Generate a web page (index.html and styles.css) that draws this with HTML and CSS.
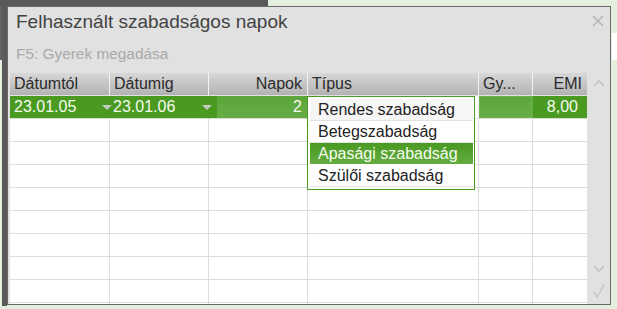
FILE: index.html
```html
<!DOCTYPE html>
<html lang="hu">
<head>
<meta charset="utf-8">
<title>Felhasznált szabadságos napok</title>
<link rel="stylesheet" href="styles.css">
</head>
<body>
<div class="dialog">
  <div class="titlebar">
    <span class="title">Felhasznált szabadságos napok</span>
    <svg class="close" width="12" height="12" viewBox="0 0 12 12"><path d="M1 1L11 11M11 1L1 11" fill="none" stroke="#b4b4b4" stroke-width="1.5"/></svg>
  </div>
  <div class="hint">F5: Gyerek megadása</div>
  <div class="tablearea">
    <div class="grid">
      <div class="row head">
        <div class="cell">Dátumtól</div>
        <div class="cell">Dátumig</div>
        <div class="cell r">Napok</div>
        <div class="cell">Típus</div>
        <div class="cell">Gy...</div>
        <div class="cell r">EMI</div>
      </div>
      <div class="row sel">
        <div class="cell date d1"><span>23.01.05</span><svg class="arrow" width="10" height="5" viewBox="0 0 10 5"><path d="M0 0H10L5 5Z" fill="#c3cbbf"/></svg></div>
        <div class="cell date d2"><span>23.01.06</span><svg class="arrow" width="10" height="5" viewBox="0 0 10 5"><path d="M0 0H10L5 5Z" fill="#c3cbbf"/></svg></div>
        <div class="cell num"><div class="edit">2</div></div>
        <div class="cell type"></div>
        <div class="cell gy"></div>
        <div class="cell r emi">8,00</div>
      </div>
      <div class="row"><div class="cell"></div><div class="cell"></div><div class="cell"></div><div class="cell"></div><div class="cell"></div><div class="cell"></div></div>
      <div class="row"><div class="cell"></div><div class="cell"></div><div class="cell"></div><div class="cell"></div><div class="cell"></div><div class="cell"></div></div>
      <div class="row"><div class="cell"></div><div class="cell"></div><div class="cell"></div><div class="cell"></div><div class="cell"></div><div class="cell"></div></div>
      <div class="row"><div class="cell"></div><div class="cell"></div><div class="cell"></div><div class="cell"></div><div class="cell"></div><div class="cell"></div></div>
      <div class="row"><div class="cell"></div><div class="cell"></div><div class="cell"></div><div class="cell"></div><div class="cell"></div><div class="cell"></div></div>
      <div class="row"><div class="cell"></div><div class="cell"></div><div class="cell"></div><div class="cell"></div><div class="cell"></div><div class="cell"></div></div>
      <div class="row"><div class="cell"></div><div class="cell"></div><div class="cell"></div><div class="cell"></div><div class="cell"></div><div class="cell"></div></div>
      <div class="row"><div class="cell"></div><div class="cell"></div><div class="cell"></div><div class="cell"></div><div class="cell"></div><div class="cell"></div></div>
      <div class="row"><div class="cell"></div><div class="cell"></div><div class="cell"></div><div class="cell"></div><div class="cell"></div><div class="cell"></div></div>
      <ul class="dropdown">
        <li class="hover">Rendes szabadság</li>
        <li>Betegszabadság</li>
        <li class="active">Apasági szabadság</li>
        <li>Szülői szabadság</li>
      </ul>
    </div>
    <div class="vscroll">
      <svg class="up" width="12" height="8" viewBox="0 0 12 8"><path d="M1 7L6 2L11 7" fill="none" stroke="#bdbdbd" stroke-width="1.4"/></svg>
      <svg class="down" width="12" height="8" viewBox="0 0 12 8"><path d="M1 1L6 6L11 1" fill="none" stroke="#bdbdbd" stroke-width="1.4"/></svg>
      <svg class="check" width="12" height="16" viewBox="0 0 12 16"><path d="M0.5 8.5L4 14L11.5 1" fill="none" stroke="#c4c4c4" stroke-width="1.4"/></svg>
    </div>
  </div>
</div>
</body>
</html>
```

FILE: styles.css
```css
html, body {
  margin: 0;
}
body {
  padding: 6px 0 0 7px;
  min-height: 309px;
  box-sizing: border-box;
  background:
    linear-gradient(#595959, #595959) 0 0 / 268px 6px no-repeat,
    linear-gradient(#595959, #595959) 2px 0 / 5px 306px no-repeat,
    linear-gradient(#616161, #616161) 0 0 / 2px 60px no-repeat,
    linear-gradient(#ffffff, #ffffff) 612px 33px / 5px 27px no-repeat,
    #e5efdd;
  font-family: "Liberation Sans", Arial, sans-serif;
}

.dialog {
  width: 604px;
  height: 299px;
  box-sizing: border-box;
  border: 1px solid #6a6a6a;
  background: #e1e1e1;
  display: flex;
  flex-direction: column;
}

.titlebar {
  display: flex;
  justify-content: space-between;
  align-items: flex-start;
  padding: 4px 6px 0 8px;
}
.title {
  font-size: 19px;
  line-height: 22px;
  color: #434343;
}
.close {
  display: block;
  margin-top: 4px;
}

.hint {
  margin-top: 12px;
  padding-left: 8px;
  font-size: 15.4px;
  line-height: 18px;
  color: #a9a9a9;
}

.tablearea {
  margin-top: 10px;
  flex: 1;
  min-height: 0;
  display: flex;
  padding-left: 2px;
  overflow: hidden;
}

.grid {
  position: relative;
  width: 577px;
  flex: none;
  background: #ffffff;
}

.row {
  display: grid;
  grid-template-columns: 100px 99px 99px 171px 54px 54px;
  height: 23px;
  box-sizing: border-box;
  border-bottom: 1px solid #dcdcdc;
}

.cell {
  box-sizing: border-box;
  border-right: 1px solid #dcdcdc;
  padding: 0 4px;
  font-size: 16px;
  line-height: 22px;
  white-space: nowrap;
}
.cell:last-child {
  border-right: none;
}
.r {
  text-align: right;
}

.head {
  background: linear-gradient(#d8d8d8, #b2b2b2);
  border-bottom-color: #e2e2e2;
  color: #2b2b2b;
}
.head .cell {
  border-right-color: #f2f2f2;
}
.head .cell:last-child {
  padding-right: 5px;
}
.head .cell:nth-child(3) {
  padding-right: 5px;
}

.sel {
  background: #4a9a22;
  color: #f5faef;
}
.sel .cell {
  border-right-color: transparent;
}
.sel .date {
  display: flex;
  justify-content: space-between;
  align-items: center;
}
.sel .d1 {
  padding: 0 0 0 4px;
}
.sel .d1 .arrow {
  margin-right: -3px;
}
.sel .d2 {
  padding: 0 0 0 3px;
}
.sel .d2 .arrow {
  margin-right: -4px;
}
.arrow {
  display: block;
  flex: none;
}
.sel .num {
  padding: 0 0 0 8px;
}
.edit {
  height: 100%;
  background: linear-gradient(#5ca63a, #66ac45);
  text-align: right;
  padding-right: 5px;
}
.sel .type {
  background: #ffffff;
  border-right-color: #eeeeee;
}
.sel .gy {
  background: linear-gradient(#5ca63a, #68ae47);
  box-shadow: inset 0 0 0 1px #6db44d;
}
.sel .emi {
  padding-right: 9px;
}

.dropdown {
  position: absolute;
  left: 297px;
  top: 23px;
  width: 168px;
  height: 94px;
  box-sizing: border-box;
  margin: 0;
  padding: 2px 1px 2px 2px;
  list-style: none;
  border: 1px solid #4a9a22;
  background: #ffffff;
}
.dropdown li {
  height: 22px;
  box-sizing: border-box;
  padding: 1px 0 0 8px;
  line-height: 20px;
  font-size: 16px;
  color: #222222;
  border-bottom: 1px solid #e2e2e2;
  white-space: nowrap;
}
.dropdown li.hover {
  background: #f6f6f6;
}
.dropdown li.active {
  background: linear-gradient(#4a9a22, #63ac40);
  color: #f6fbef;
  border-bottom-color: #ffffff;
}

.vscroll {
  width: 23px;
  flex: none;
  display: flex;
  flex-direction: column;
  align-items: center;
}
.vscroll svg {
  display: block;
}
.up {
  margin-top: 6px;
}
.down {
  margin-top: auto;
}
.check {
  margin-top: 10px;
  margin-bottom: 5px;
}
```
